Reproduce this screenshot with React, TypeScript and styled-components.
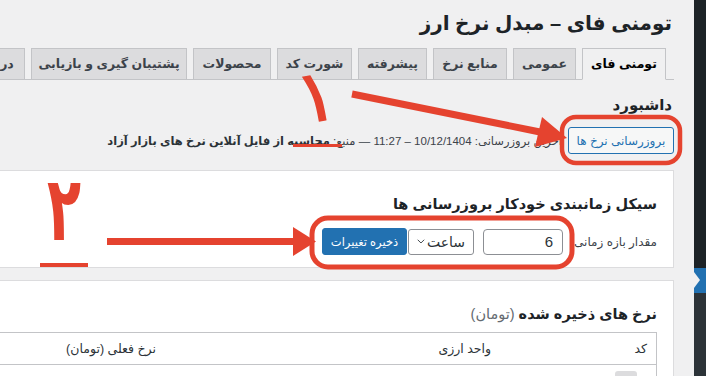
import styled, { createGlobalStyle } from 'styled-components'
import { ChevronDown } from 'lucide-react'

const RED = '#e5432f'

const GlobalStyle = createGlobalStyle`
  *, *::before, *::after { box-sizing: border-box; }
  html, body { margin: 0; padding: 0; background: #f0f0f1; }
  body {
    font-family: "Liberation Sans", "DejaVu Sans", sans-serif;
    color: #3c434a;
    overflow: hidden;
  }
`

const tabs = [
  { label: 'تومنی فای', w: 84 },
  { label: 'عمومی', w: 63 },
  { label: 'منابع نرخ', w: 74 },
  { label: 'پیشرفته', w: 69 },
  { label: 'شورت کد', w: 75 },
  { label: 'محصولات', w: 78 },
  { label: 'پشتیبان گیری و بازیابی', w: 156 },
  { label: 'درباره', w: 60 },
]

const App = () => {
  return (
    <>
      <GlobalStyle />
      <Page dir="rtl">
        <Sidebar>
          <MenuBlock $h={268} />
          <CurrentItem />
          <SubMenu />
        </Sidebar>

        <Content>
          <Title>تومنی فای – مبدل نرخ ارز</Title>

          <TabBar>
            {tabs.map((t, i) => (
              <Tab key={t.label} $active={i === 0} $w={t.w}>{t.label}</Tab>
            ))}
          </TabBar>

          <SectionTitle>داشبورد</SectionTitle>
          <StatusRow>
            <OutlineButton>بروزرسانی نرخ ها</OutlineButton>
            <StatusText>
              آخرین بروزرسانی: 10/12/1404 – 11:27 — منبع: <b>محاسبه از فایل آنلاین نرخ های بازار آزاد</b>
            </StatusText>
          </StatusRow>

          <Panel $gap={16}>
            <PanelTitle>سیکل زمانبندی خودکار بروزرسانی ها</PanelTitle>
            <FormRow>
              <FieldLabel>مقدار بازه زمانی</FieldLabel>
              <NumberInput>6</NumberInput>
              <UnitSelect>
                <span>ساعت</span>
                <ChevronDown size={13} strokeWidth={1.8} />
              </UnitSelect>
              <PrimaryButton>ذخیره تغییرات</PrimaryButton>
            </FormRow>
          </Panel>

          <Panel $gap={12}>
            <PanelTitle>
              نرخ های ذخیره شده <Muted>(تومان)</Muted>
            </PanelTitle>
            <Table>
              <HeadRow>
                <Cell>کد</Cell>
                <Cell>واحد ارزی</Cell>
                <Cell>نرخ فعلی (تومان)</Cell>
              </HeadRow>
              <BodyRow>
                <Cell><Badge /></Cell>
                <Cell />
                <Cell />
              </BodyRow>
            </Table>
          </Panel>
        </Content>

        <Annotations width="706" height="376" viewBox="0 0 706 376">
          <g fill={RED}>
            <text
              x="316"
              y="121"
              fontSize="72"
              fontFamily="DejaVu Sans, sans-serif"
              textAnchor="middle"
              stroke={RED}
              strokeWidth="1.5"
              transform="rotate(-10 316 95)"
            >۱</text>
            <rect x="293" y="144" width="49" height="3" />
            <line x1="352" y1="94" x2="540" y2="132" stroke={RED} strokeWidth="7" />
            <polygon points="567,138 542,117 535,147" />

            <text
              x="64"
              y="240"
              fontSize="90"
              fontWeight="bold"
              fontFamily="DejaVu Sans, sans-serif"
              textAnchor="middle"
              transform="translate(64 0) scale(0.62 1) translate(-64 0)"
            >۲</text>
            <rect x="40" y="263" width="48" height="4" />
            <rect x="107" y="238" width="188" height="7" />
            <polygon points="293,227 316,241.5 293,256" />
          </g>
          <g fill="none" stroke={RED}>
            <rect x="562" y="117" width="118" height="46" rx="14" strokeWidth="4.5" />
            <rect x="312" y="218" width="260" height="49" rx="16" strokeWidth="5" />
          </g>
        </Annotations>
      </Page>
    </>
  )
}

export default App

const Page = styled.div`
  position: relative;
  direction: rtl;
  display: flex;
  width: 706px;
  height: 376px;
  overflow: hidden;
  background: #f0f0f1;
`

const Sidebar = styled.aside`
  flex: 0 0 12px;
  display: flex;
  flex-direction: column;
  background: #1d2327;
`

const MenuBlock = styled.div<{ $h: number }>`
  height: ${p => p.$h}px;
  background: #1d2327;
`

const CurrentItem = styled.div`
  position: relative;
  height: 25px;
  background: #2271b1;
  &::before {
    content: '';
    position: absolute;
    left: 0;
    top: 4px;
    border-top: 8px solid transparent;
    border-bottom: 8px solid transparent;
    border-left: 6px solid #f0f0f1;
  }
`

const SubMenu = styled.div`
  flex: 1;
  background: #2c3338;
`

const Content = styled.main`
  flex: 0 0 880px;
  display: flex;
  flex-direction: column;
  padding: 8px 20px 0 0;
`

const Title = styled.h1`
  margin: 0 2px 0 0;
  font-size: 20px;
  line-height: 30px;
  font-weight: 700;
  color: #1d2327;
`

const TabBar = styled.nav`
  display: flex;
  align-items: flex-end;
  gap: 6px;
  margin-top: 10px;
  padding-right: 8px;
  height: 32px;
  border-bottom: 1px solid #c3c4c7;
`

const Tab = styled.div<{ $active?: boolean; $w: number }>`
  flex: 0 0 ${p => p.$w}px;
  height: 32px;
  margin-bottom: -1px;
  border: 1px solid #c3c4c7;
  border-bottom-color: ${p => (p.$active ? '#f0f0f1' : '#c3c4c7')};
  background: ${p => (p.$active ? '#f0f0f1' : '#dcdcde')};
  color: ${p => (p.$active ? '#000' : '#3c434a')};
  font-size: 12.5px;
  font-weight: 600;
  line-height: 30px;
  text-align: center;
  white-space: nowrap;
  overflow: hidden;
`

const SectionTitle = styled.h2`
  margin: 15px 2px 0 0;
  font-size: 15px;
  line-height: 20px;
  font-weight: 700;
  color: #1d2327;
`

const StatusRow = styled.div`
  display: flex;
  align-items: center;
  gap: 6px;
  margin-top: 12px;
`

const OutlineButton = styled.button`
  width: 106px;
  height: 27px;
  padding: 0;
  border: 1px solid #2271b1;
  border-radius: 3px;
  background: #f6f7f7;
  color: #2271b1;
  font-family: inherit;
  font-size: 12px;
  white-space: nowrap;
`

const StatusText = styled.span`
  font-size: 11.5px;
  color: #3c434a;
  white-space: nowrap;
  b { color: #2c3338; }
`

const Panel = styled.section<{ $gap: number }>`
  margin-top: ${p => p.$gap}px;
  padding: 22px 16px 12px;
  background: #fff;
  border: 1px solid #dcdcde;
`

const PanelTitle = styled.h3`
  margin: 0;
  font-size: 14.5px;
  line-height: 22px;
  font-weight: 700;
  color: #1d2327;
`

const Muted = styled.span`
  font-weight: 400;
  color: #646970;
`

const FormRow = styled.div`
  display: flex;
  align-items: center;
  margin-top: 13px;
`

const FieldLabel = styled.label`
  width: 92px;
  margin-left: 2px;
  font-size: 12px;
  color: #3c434a;
  white-space: nowrap;
`

const NumberInput = styled.div`
  width: 80px;
  height: 26px;
  margin-left: 9px;
  padding: 0 9px;
  border: 1px solid #8c8f94;
  border-radius: 4px;
  background: #fff;
  color: #2c3338;
  font-size: 15px;
  line-height: 24px;
`

const UnitSelect = styled.div`
  width: 66px;
  height: 26px;
  margin-left: 1px;
  padding: 0 8px 0 6px;
  display: flex;
  align-items: center;
  justify-content: space-between;
  border: 1px solid #8c8f94;
  border-radius: 3px;
  background: #fff;
  color: #2c3338;
  font-size: 14px;
`

const PrimaryButton = styled.button`
  width: 85px;
  height: 27px;
  padding: 0;
  border: 1px solid #2271b1;
  border-radius: 3px;
  background: #2271b1;
  color: #fff;
  font-family: inherit;
  font-size: 11.5px;
  white-space: nowrap;
`

const Table = styled.div`
  margin-top: 7px;
  border: 1px solid #c3c4c7;
`

const HeadRow = styled.div`
  display: grid;
  grid-template-columns: 156px 335px 1fr;
  align-items: center;
  height: 32px;
  border-bottom: 1px solid #c3c4c7;
  font-size: 12.5px;
  color: #2c3338;
`

const BodyRow = styled.div`
  display: grid;
  grid-template-columns: 156px 335px 1fr;
  padding-top: 6px;
`

const Cell = styled.div`
  padding: 0 9px;
  white-space: nowrap;
`

const Badge = styled.div`
  width: 22px;
  height: 22px;
  margin-right: 10px;
  border-radius: 3px;
  background: #dcdcde;
`

const Annotations = styled.svg`
  position: absolute;
  left: 0;
  top: 0;
  pointer-events: none;
`
